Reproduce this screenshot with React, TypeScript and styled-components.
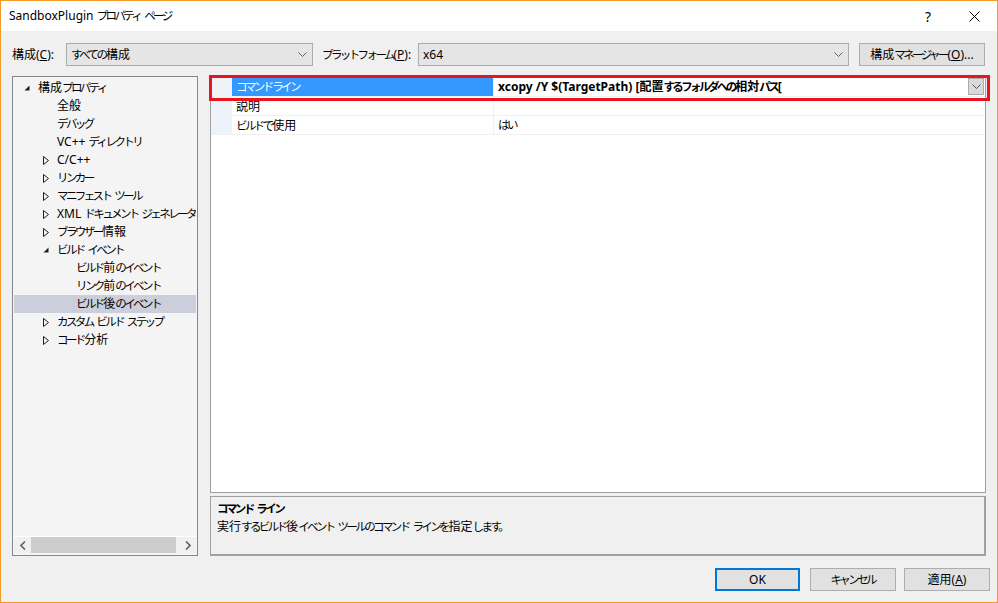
import React from "react";
import styled, { createGlobalStyle } from "styled-components";

const GlobalStyle = createGlobalStyle`
  html, body { margin: 0; padding: 0; background: #f0f0f0; }
  * { box-sizing: border-box; }
  body {
    font-family: "Noto Sans", "Noto Sans CJK JP", sans-serif;
    font-size: 12px;
    color: #000;
  }
`;

/* Kana in the Windows UI font are much narrower than in Noto Sans CJK */
const Kana = styled.span`
  font-size: 11.5px;
  letter-spacing: -2.6px;
  margin-right: 0.6px;
`;

const kanaRe = /([\u3040-\u30ff\u3000-\u3002]+)/;

function jp(text: string): React.ReactNode {
  return text.split(kanaRe).map((part, i) =>
    i % 2 === 1 ? <Kana key={i}>{part}</Kana> : <React.Fragment key={i}>{part}</React.Fragment>
  );
}

const Window = styled.div`
  width: 998px;
  height: 603px;
  border: 1px solid #f39a26;
  background: #f0f0f0;
  display: flex;
  flex-direction: column;
  overflow: hidden;
`;

const TitleBar = styled.div`
  height: 30px;
  background: #fff;
  display: flex;
  align-items: center;
  padding-left: 8px;
  flex-shrink: 0;
`;

const TitleText = styled.div`
  flex: 1;
  font-size: 12px;
  line-height: 16px;
  color: #000;
`;

const CaptionButton = styled.div`
  width: 46px;
  height: 30px;
  display: flex;
  align-items: center;
  justify-content: center;
  font-size: 14px;
  color: #000;
`;

const ConfigRow = styled.div`
  display: flex;
  align-items: center;
  height: 23px;
  margin-top: 12px;
  padding-left: 11px;
  flex-shrink: 0;
`;

const FieldLabel = styled.div<{ $w: number; $ml?: number }>`
  width: ${(p) => p.$w}px;
  margin-left: ${(p) => p.$ml ?? 0}px;
  line-height: 16px;
  white-space: nowrap;
`;

const Combo = styled.div<{ $w: number }>`
  width: ${(p) => p.$w}px;
  height: 23px;
  background: #e5e5e5;
  border: 1px solid #acacac;
  display: flex;
  align-items: center;
  padding: 0 5px 0 4px;
  line-height: 16px;
`;

const ComboText = styled.span`
  flex: 1;
`;

const PushButton = styled.div<{ $w: number; $ml?: number; $default?: boolean }>`
  width: ${(p) => p.$w}px;
  margin-left: ${(p) => p.$ml ?? 0}px;
  height: 23px;
  background: #e1e1e1;
  border: ${(p) => (p.$default ? "2px solid #0078d7" : "1px solid #adadad")};
  display: flex;
  align-items: center;
  justify-content: center;
  line-height: 16px;
  white-space: nowrap;
`;

const Main = styled.div`
  display: flex;
  gap: 12px;
  margin-top: 10px;
  padding: 0 11px;
  height: 480px;
  flex-shrink: 0;
`;

const TreePanel = styled.div`
  width: 186px;
  border: 1px solid #828790;
  background: #f4f4f4;
  display: flex;
  flex-direction: column;
  padding: 0 1px 2px 1px;
`;

const TreeList = styled.div`
  flex: 1;
  padding-top: 2px;
  overflow: hidden;
`;

const TreeRow = styled.div<{ $level: number; $selected?: boolean }>`
  height: 18px;
  display: flex;
  align-items: center;
  white-space: nowrap;
  padding-left: ${(p) => [10, 29, 62][p.$level]}px;
  background: ${(p) => (p.$selected ? "#cccedb" : "transparent")};
  line-height: 16px;
`;

const Expander = styled.span`
  width: 14px;
  display: inline-flex;
  align-items: center;
  justify-content: flex-start;
  flex-shrink: 0;
`;

const HScroll = styled.div`
  height: 17px;
  border-top: 1px solid #fff;
  background: #f0f0f0;
  display: flex;
  align-items: center;
`;

const ScrollArrow = styled.div`
  width: 17px;
  height: 16px;
  display: flex;
  align-items: center;
  justify-content: center;
`;

const ScrollTrack = styled.div`
  flex: 1;
  height: 16px;
  display: flex;
  align-items: stretch;
`;

const ScrollThumb = styled.div`
  width: 145px;
  background: #cdcdcd;
`;

const RightCol = styled.div`
  flex: 1;
  display: flex;
  flex-direction: column;
  gap: 3px;
`;

const GridWrap = styled.div`
  position: relative;
  height: 417px;
  border: 1px solid #a0a0a0;
  border-top-color: #ffffff;
  background: #fff;
`;

const Highlight = styled.div`
  position: absolute;
  left: -2px;
  top: -2px;
  width: 781px;
  height: 26px;
  border: 3px solid #e8151f;
  pointer-events: none;
`;

const PropRow = styled.div<{ $h?: number }>`
  display: grid;
  grid-template-columns: 21px 262px 1fr;
  height: ${(p) => p.$h ?? 19}px;
  border-bottom: 1px solid #f0f0f0;
`;

const Gutter = styled.div`
  background: #eef3fa;
`;

const NameCell = styled.div<{ $selected?: boolean }>`
  display: flex;
  align-items: center;
  padding-left: 4px;
  padding-top: 1px;
  line-height: 16px;
  white-space: pre;
  background: ${(p) => (p.$selected ? "#3399ff" : "transparent")};
  color: ${(p) => (p.$selected ? "#fff" : "#000")};
  border-right: 1px solid #f0f0f0;
`;

const ValueCell = styled.div<{ $bold?: boolean }>`
  display: flex;
  align-items: center;
  padding-left: 4px;
  padding-right: 1px;
  line-height: 16px;
  font-weight: ${(p) => (p.$bold ? 700 : 400)};
  white-space: nowrap;
  overflow: hidden;
`;

const ValueText = styled.span`
  flex: 1;
  padding-top: 1px;
`;

const DropBtn = styled.div`
  width: 16px;
  height: 17px;
  background: #dadada;
  border: 1px solid #adadad;
  display: flex;
  align-items: center;
  justify-content: center;
`;

const DescPanel = styled.div`
  height: 60px;
  border: 1px solid #a0a0a0;
  border-right-width: 2px;
  border-bottom-width: 2px;
  background: #f0f0f0;
  padding: 3px 6px;
  line-height: 18px;
`;

const DescTitle = styled.div`
  font-weight: 700;
`;

const Footer = styled.div`
  display: flex;
  justify-content: flex-end;
  margin-top: 12px;
  padding-right: 7px;
`;

const Chevron = ({ color = "#606060" }: { color?: string }) => (
  <svg width="9" height="5" viewBox="0 0 9 5">
    <polyline points="0.5,0.5 4.5,4.5 8.5,0.5" fill="none" stroke={color} strokeWidth="1" />
  </svg>
);

const ExpandedIcon = () => (
  <svg width="6" height="6" viewBox="0 0 6 6">
    <polygon points="5.5,0.5 5.5,5.5 0.5,5.5" fill="#1e1e1e" />
  </svg>
);

const CollapsedIcon = () => (
  <svg width="6" height="9" viewBox="0 0 6 9">
    <polygon points="0.5,0.5 5.5,4.5 0.5,8.5" fill="none" stroke="#1e1e1e" strokeWidth="1" />
  </svg>
);

type Node = { label: string; level: number; exp?: "open" | "closed"; selected?: boolean };

const nodes: Node[] = [
  { label: "構成プロパティ", level: 0, exp: "open" },
  { label: "全般", level: 1 },
  { label: "デバッグ", level: 1 },
  { label: "VC++ ディレクトリ", level: 1 },
  { label: "C/C++", level: 1, exp: "closed" },
  { label: "リンカー", level: 1, exp: "closed" },
  { label: "マニフェスト ツール", level: 1, exp: "closed" },
  { label: "XML ドキュメント ジェネレーター", level: 1, exp: "closed" },
  { label: "ブラウザー情報", level: 1, exp: "closed" },
  { label: "ビルド イベント", level: 1, exp: "open" },
  { label: "ビルド前のイベント", level: 2 },
  { label: "リンク前のイベント", level: 2 },
  { label: "ビルド後のイベント", level: 2, selected: true },
  { label: "カスタム ビルド ステップ", level: 1, exp: "closed" },
  { label: "コード分析", level: 1, exp: "closed" },
];

export default function App() {
  return (
    <>
      <GlobalStyle />
      <Window>
        <TitleBar>
          <TitleText>{jp("SandboxPlugin プロパティ ページ")}</TitleText>
          <CaptionButton>?</CaptionButton>
          <CaptionButton>
            <svg width="11" height="11" viewBox="0 0 11 11">
              <path d="M0.5 0.5 L10.5 10.5 M10.5 0.5 L0.5 10.5" stroke="#000" strokeWidth="1" />
            </svg>
          </CaptionButton>
        </TitleBar>

        <ConfigRow>
          <FieldLabel $w={54}>
            構成(<u>C</u>):
          </FieldLabel>
          <Combo $w={247}>
            <ComboText>{jp("すべての構成")}</ComboText>
            <Chevron />
          </Combo>
          <FieldLabel $w={96} $ml={9}>
            {jp("プラットフォーム")}(<u>P</u>):
          </FieldLabel>
          <Combo $w={431}>
            <ComboText>x64</ComboText>
            <Chevron />
          </Combo>
          <PushButton $w={126} $ml={10}>
            {jp("構成マネージャー")}(<u>O</u>)...
          </PushButton>
        </ConfigRow>

        <Main>
          <TreePanel>
            <TreeList>
              {nodes.map((n) => (
                <TreeRow key={n.label} $level={n.level} $selected={n.selected}>
                  {n.level < 2 && (
                    <Expander>
                      {n.exp === "open" ? <ExpandedIcon /> : n.exp === "closed" ? <CollapsedIcon /> : null}
                    </Expander>
                  )}
                  <span>{jp(n.label)}</span>
                </TreeRow>
              ))}
            </TreeList>
            <HScroll>
              <ScrollArrow>
                <svg width="6" height="9" viewBox="0 0 6 9">
                  <polyline points="5,0.5 1,4.5 5,8.5" fill="none" stroke="#606060" strokeWidth="1.6" />
                </svg>
              </ScrollArrow>
              <ScrollTrack>
                <ScrollThumb />
              </ScrollTrack>
              <ScrollArrow>
                <svg width="6" height="9" viewBox="0 0 6 9">
                  <polyline points="1,0.5 5,4.5 1,8.5" fill="none" stroke="#606060" strokeWidth="1.6" />
                </svg>
              </ScrollArrow>
            </HScroll>
          </TreePanel>

          <RightCol>
            <GridWrap>
              <PropRow $h={20}>
                <Gutter />
                <NameCell $selected>{jp("コマンド ライン")}</NameCell>
                <ValueCell $bold>
                  <ValueText>{jp("xcopy /Y $(TargetPath) [配置するフォルダへの相対パス[")}</ValueText>
                  <DropBtn>
                    <Chevron color="#555" />
                  </DropBtn>
                </ValueCell>
              </PropRow>
              <PropRow>
                <Gutter />
                <NameCell>説明</NameCell>
                <ValueCell />
              </PropRow>
              <PropRow>
                <Gutter />
                <NameCell>{jp("ビルドで使用")}</NameCell>
                <ValueCell>{jp("はい")}</ValueCell>
              </PropRow>
              <Highlight />
            </GridWrap>
            <DescPanel>
              <DescTitle>{jp("コマンド ライン")}</DescTitle>
              <div>{jp("実行するビルド後イベント ツールのコマンド ラインを指定します。")}</div>
            </DescPanel>
          </RightCol>
        </Main>

        <Footer>
          <PushButton $w={85} $default>
            OK
          </PushButton>
          <PushButton $w={86} $ml={10}>
            {jp("キャンセル")}
          </PushButton>
          <PushButton $w={86} $ml={8}>
            適用(<u>A</u>)
          </PushButton>
        </Footer>
      </Window>
    </>
  );
}
